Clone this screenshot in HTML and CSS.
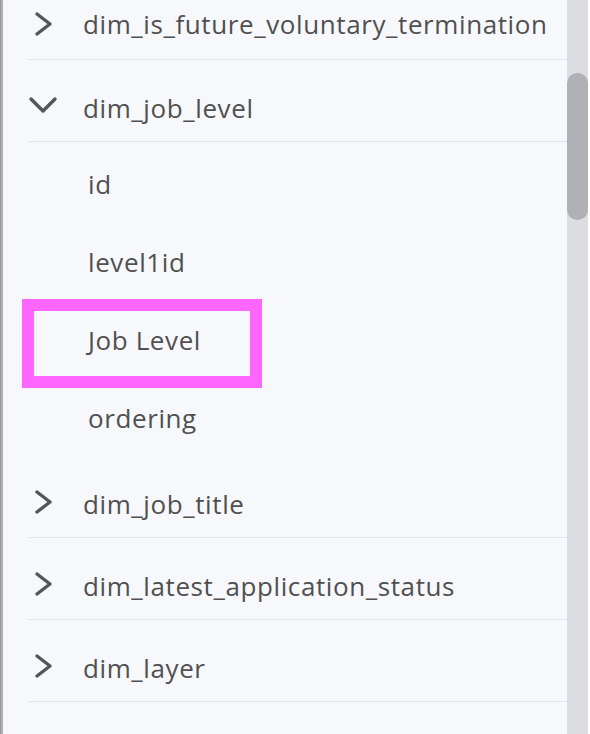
FILE: index.html
```html
<!DOCTYPE html>
<html lang="en">
<head>
    <meta charset="UTF-8">
    <meta name="viewport" content="width=device-width, initial-scale=1.0">
    <title>Tables</title>
    <link rel="stylesheet" href="styles.css">
</head>
<body>

    <div class="panel">
        <div class="edge"></div>

        <div class="tree">
            <div class="table-row first">
                <span class="chevron">
                    <svg width="20" height="26" viewBox="0 0 20 26"><polyline points="3,3 16,13 3,23"/></svg>
                </span>
                <span class="name">dim_is_future_voluntary_termination</span>
            </div>

            <div class="table-row open">
                <span class="chevron down">
                    <svg width="30" height="20" viewBox="0 0 30 20"><polyline points="3,3 15,15 27,3"/></svg>
                </span>
                <span class="name">dim_job_level</span>
            </div>
            <div class="columns">
                <div class="column">id</div>
                <div class="column">level1id</div>
                <div class="column highlight">Job Level</div>
                <div class="column">ordering</div>
            </div>

            <div class="table-row">
                <span class="chevron">
                    <svg width="20" height="26" viewBox="0 0 20 26"><polyline points="3,3 16,13 3,23"/></svg>
                </span>
                <span class="name">dim_job_title</span>
            </div>

            <div class="table-row">
                <span class="chevron">
                    <svg width="20" height="26" viewBox="0 0 20 26"><polyline points="3,3 16,13 3,23"/></svg>
                </span>
                <span class="name">dim_latest_application_status</span>
            </div>

            <div class="table-row">
                <span class="chevron">
                    <svg width="20" height="26" viewBox="0 0 20 26"><polyline points="3,3 16,13 3,23"/></svg>
                </span>
                <span class="name">dim_layer</span>
            </div>
        </div>

        <div class="scrollbar">
            <div class="thumb"></div>
        </div>
        <div class="gutter"></div>
    </div>

</body>
</html>
```

FILE: styles.css
```css
body {
    margin: 0;
    background-color: #f7f8fc;
    font-family: "Open Sans", Arial, sans-serif;
    color: #505050;
}

.panel {
    display: flex;
    height: 734px;
    overflow: hidden;
}

.edge {
    width: 2px;
    background-color: #b0b0b0;
    border-left: 1px solid #999;
}

.tree {
    flex: 1;
    padding-left: 25px;
}

.table-row {
    display: flex;
    align-items: center;
    box-sizing: border-box;
    height: 82px;
    padding-top: 14px;
    border-bottom: 1px solid #e1e3ef;
    font-size: 26px;
    letter-spacing: 0.6px;
}

.table-row.first {
    margin-top: -21px;
    height: 81px;
    padding-top: 10px;
}

.chevron {
    display: flex;
    width: 49px;
    padding-left: 6px;
    margin-bottom: 4px;
}

.table-row.first .chevron {
    margin-bottom: 0;
}

.chevron.down {
    padding-left: 0;
    width: 55px;
}

.chevron svg polyline {
    fill: none;
    stroke: #555;
    stroke-width: 3.4;
    stroke-linecap: round;
    stroke-linejoin: round;
}

.columns {
    padding-bottom: 2px;
}

.column {
    display: flex;
    align-items: center;
    height: 78px;
    padding-top: 6px;
    box-sizing: border-box;
    padding-left: 60px;
    font-size: 26px;
    letter-spacing: 0.6px;
}

.highlight {
    position: relative;
}

.highlight::after {
    content: "";
    position: absolute;
    left: -6px;
    top: 1px;
    width: 240px;
    height: 89px;
    box-sizing: border-box;
    border: 12px solid #ff66ff;
}

.scrollbar {
    width: 21px;
    background-color: #dcdde1;
    padding-top: 73px;
}

.thumb {
    height: 147px;
    border-radius: 10px;
    background-color: #b0b1b6;
}

.gutter {
    width: 2px;
    background-color: #fff;
}
```
